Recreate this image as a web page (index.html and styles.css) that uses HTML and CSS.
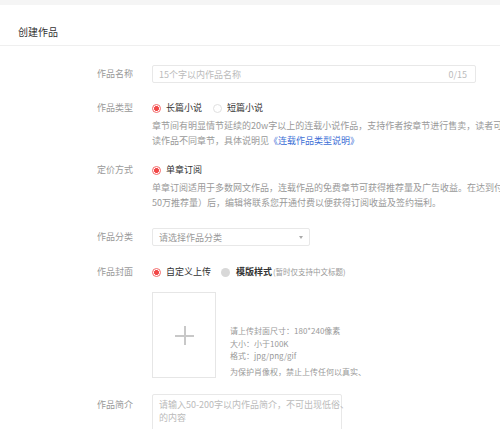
FILE: index.html
```html
<!DOCTYPE html>
<html lang="zh-CN">
<head>
<meta charset="utf-8">
<title>创建作品</title>
<link rel="stylesheet" href="styles.css">
</head>
<body>
<div class="topbar"></div>
<div class="header"><span class="title">创建作品</span></div>
<div class="form">
  <div class="row row-name">
    <div class="label label-input">作品名称</div>
    <div class="field">
      <div class="input"><span class="ph">15个字以内作品名称</span><span class="count">0/15</span></div>
    </div>
  </div>

  <div class="row row-type">
    <div class="label label-radio">作品类型</div>
    <div class="field">
      <div class="radios">
        <span class="radio on"></span><span class="rtext">长篇小说</span>
        <span class="radio off"></span><span class="rtext">短篇小说</span>
      </div>
      <div class="desc">
        <div class="line">章节间有明显情节延续的20w字以上的连载小说作品，支持作者按章节进行售卖，读者可选择购买阅</div>
        <div class="line">读作品不同章节，具体说明见<span class="link">《连载作品类型说明》</span></div>
      </div>
    </div>
  </div>

  <div class="row row-price">
    <div class="label label-radio">定价方式</div>
    <div class="field">
      <div class="radios">
        <span class="radio on"></span><span class="rtext">单章订阅</span>
      </div>
      <div class="desc">
        <div class="line">单章订阅适用于多数网文作品，连载作品的免费章节可获得推荐量及广告收益。在达到付费标准（如</div>
        <div class="line">50万推荐量）后，编辑将联系您开通付费以便获得订阅收益及签约福利。</div>
      </div>
    </div>
  </div>

  <div class="row row-cat">
    <div class="label label-input">作品分类</div>
    <div class="field">
      <div class="select"><span class="ph">请选择作品分类</span><span class="arrow"></span></div>
    </div>
  </div>

  <div class="row row-cover">
    <div class="label label-radio">作品封面</div>
    <div class="field">
      <div class="radios">
        <span class="radio on"></span><span class="rtext">自定义上传</span>
        <span class="radio gray"></span><span class="rtext strong">模版样式</span><span class="note">(暂时仅支持中文标题)</span>
      </div>
      <div class="upload">
        <div class="upbox"><span class="plus-h"></span><span class="plus-v"></span></div>
        <div class="uptips">
          <div class="tip">请上传封面尺寸：180*240像素</div>
          <div class="tip">大小：小于100K</div>
          <div class="tip">格式：jpg/png/gif</div>
          <div class="tip tip-gap">为保护肖像权，禁止上传任何以真实、</div>
        </div>
      </div>
    </div>
  </div>

  <div class="row row-intro">
    <div class="label label-area">作品简介</div>
    <div class="field">
      <div class="area">
        <div class="ph-line">请输入50-200字以内作品简介，不可出现低俗、</div>
        <div class="ph-line">的内容</div>
      </div>
    </div>
  </div>
</div>
</body>
</html>
```

FILE: styles.css
```css
html, body {
  margin: 0;
  padding: 0;
  width: 500px;
  height: 429px;
  overflow: hidden;
  background: #fff;
  font-family: "Noto Sans CJK SC", "Noto Sans", sans-serif;
  color: #333;
}

.topbar {
  height: 5px;
  background: #f5f5f5;
}

.header {
  padding: 21px 0 7px 18px;
  border-bottom: 1px solid #efefef;
}

.title {
  display: block;
  font-size: 10px;
  line-height: 12px;
  color: #333;
}

.form {
  padding-top: 0;
}

.row {
  display: grid;
  grid-template-columns: 133px 1fr;
  column-gap: 19px;
  align-items: start;
}

.row-name { margin-top: 19px; }
.row-type { margin-top: 19px; }
.row-price { margin-top: 16px; }
.row-cat { margin-top: 18px; }
.row-cover { margin-top: 20px; }
.row-intro { margin-top: 16px; }

.label {
  text-align: right;
  font-size: 9px;
  color: #999;
  white-space: nowrap;
}

.label-input { line-height: 18px; }
.label-radio { line-height: 12px; }
.label-area { line-height: 13px; margin-top: 4px; }

.field {
  min-width: 0;
}

.input {
  box-sizing: border-box;
  width: 324px;
  height: 18px;
  border: 1px solid #e8e8e8;
  border-radius: 2px;
  display: flex;
  align-items: center;
  justify-content: space-between;
  padding: 0 8px 0 6px;
  font-size: 9px;
}

.ph {
  color: #bbb;
  white-space: nowrap;
}

.count {
  color: #bbb;
}

.radios {
  display: flex;
  align-items: center;
  height: 12px;
  font-size: 9px;
  line-height: 12px;
  white-space: nowrap;
}

.radio {
  box-sizing: border-box;
  width: 9px;
  height: 9px;
  border-radius: 50%;
  flex: none;
  margin-right: 5px;
}

.radio.on {
  border: 1px solid #f46a6a;
  background: radial-gradient(circle, #f24848 0 2.2px, #fff 2.6px);
}

.radio.off {
  border: 1px solid #e0e0e0;
  background: #fff;
  margin-left: 11px;
}

.radio.gray {
  background: #d8d8d8;
  margin-left: 10px;
  margin-right: 6px;
}

.rtext {
  color: #333;
}

.rtext.strong {
  font-weight: 700;
  color: #333;
}

.note {
  font-size: 7.5px;
  color: #999;
  margin-left: 1px;
}

.desc {
  margin-top: 4px;
  font-size: 9px;
  line-height: 15px;
  color: #999;
}

.line {
  white-space: nowrap;
}

.link {
  color: #3d6fd6;
}

.select {
  box-sizing: border-box;
  width: 158px;
  height: 18px;
  border: 1px solid #e8e8e8;
  border-radius: 2px;
  display: flex;
  align-items: center;
  justify-content: space-between;
  padding: 0 6px 0 6px;
  font-size: 9px;
}

.select .ph {
  color: #999;
}

.arrow {
  width: 0;
  height: 0;
  border-left: 2.5px solid transparent;
  border-right: 2.5px solid transparent;
  border-top: 3px solid #aaa;
}

.upload {
  margin-top: 14px;
  display: flex;
  align-items: flex-end;
  gap: 14px;
}

.upbox {
  box-sizing: border-box;
  width: 64px;
  height: 86px;
  border: 1px solid #e6e6e6;
  position: relative;
  flex: none;
}

.plus-h {
  position: absolute;
  left: 22px;
  top: 42px;
  width: 19px;
  height: 1.5px;
  background: #c8c8c8;
}

.plus-v {
  position: absolute;
  left: 31px;
  top: 33px;
  width: 1.5px;
  height: 19px;
  background: #c8c8c8;
}

.uptips {
  font-size: 8px;
  line-height: 12.5px;
  color: #999;
  white-space: nowrap;
  padding-bottom: 0;
}

.tip-gap {
  margin-top: 3px;
}

.area {
  box-sizing: border-box;
  width: 190px;
  height: 60px;
  border: 1px solid #e8e8e8;
  border-radius: 2px;
  padding: 3px 6px;
  font-size: 9px;
  line-height: 13px;
  color: #bbb;
}

.ph-line {
  white-space: nowrap;
}
```
